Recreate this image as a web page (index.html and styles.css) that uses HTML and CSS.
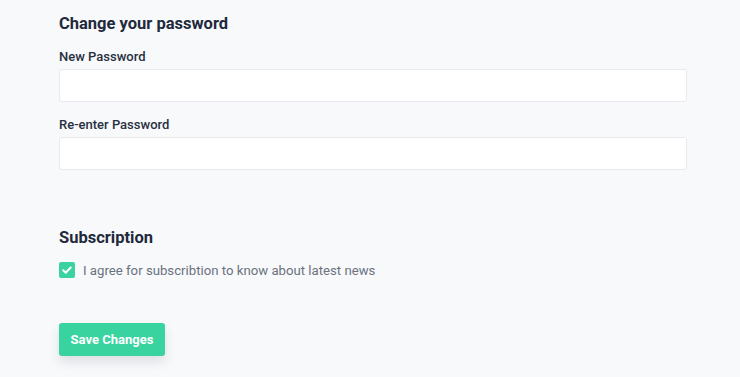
FILE: index.html
```html
<!DOCTYPE html>
<html lang="en">
<head>
    <meta charset="UTF-8">
    <meta name="viewport" content="width=device-width, initial-scale=1.0">
    <title>Account settings</title>
    <link rel="stylesheet" href="styles.css">
</head>
<body>
    <form class="settings-form" onsubmit="return false">
        <h2 class="section-title">Change your password</h2>

        <div class="field">
            <label class="field-label" for="new-password">New Password</label>
            <input class="field-input" type="password" id="new-password">
        </div>

        <div class="field">
            <label class="field-label" for="confirm-password">Re-enter Password</label>
            <input class="field-input" type="password" id="confirm-password">
        </div>

        <h2 class="section-title subscription-title">Subscription</h2>

        <label class="check-row">
            <span class="check-box">
                <svg width="12" height="12" viewBox="0 0 12 12">
                    <path d="M2.2 6.3l2.5 2.4 5-5.2" fill="none" stroke="#fff" stroke-width="2" stroke-linecap="round" stroke-linejoin="round"/>
                </svg>
            </span>
            <span class="check-text">I agree for subscribtion to know about latest news</span>
        </label>

        <button class="save-button" type="submit">Save Changes</button>
    </form>
</body>
</html>
```

FILE: styles.css
```css
* {
    margin: 0;
    padding: 0;
    box-sizing: border-box;
}

body {
    font-family: Roboto, 'Noto Sans', sans-serif;
    background: #f8f9fb;
    color: #1f2a3c;
    min-height: 100vh;
}

.settings-form {
    width: 628px;
    margin-left: 59px;
    padding-top: 12px;
}

.section-title {
    font-size: 16.5px;
    font-weight: 700;
    line-height: 24px;
    color: #1e293b;
    margin-bottom: 11px;
}

.field {
    margin-bottom: 13px;
}

.field-label {
    display: block;
    font-size: 13px;
    font-weight: 500;
    line-height: 20px;
    color: #27303f;
    margin-bottom: 2px;
}

.field-input {
    display: block;
    width: 100%;
    height: 33px;
    background: #fff;
    border: 1px solid #e8eaee;
    border-radius: 3px;
    padding: 0 12px;
    font-size: 13px;
    outline: none;
}

.subscription-title {
    margin-top: 56px;
    margin-bottom: 10px;
}

.check-row {
    display: flex;
    align-items: center;
    gap: 8px;
    height: 20px;
    cursor: pointer;
}

.check-box {
    width: 16px;
    height: 16px;
    border-radius: 2px;
    background: #3ad29f;
    display: flex;
    align-items: center;
    justify-content: center;
}

.check-text {
    font-size: 13.2px;
    color: #6b7280;
}

.save-button {
    margin-top: 43px;
    width: 106px;
    height: 33px;
    background: #38d39f;
    color: #fff;
    border: none;
    border-radius: 3px;
    font-family: inherit;
    font-size: 13px;
    font-weight: 700;
    cursor: pointer;
    box-shadow: 0 6px 12px rgba(30, 41, 59, 0.12);
}
```
